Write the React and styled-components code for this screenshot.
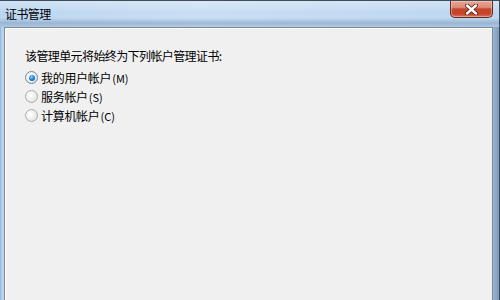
import React from "react";
import styled, { createGlobalStyle } from "styled-components";

const Global = createGlobalStyle`
  html, body { margin: 0; padding: 0; }
  body {
    width: 500px;
    height: 300px;
    overflow: hidden;
    font-family: "Noto Sans CJK SC", "Noto Sans", sans-serif;
  }
`;

const Window = styled.div`
  width: 500px;
  height: 300px;
  display: flex;
  flex-direction: column;
  background: linear-gradient(90deg, #8fb4da 0px, #b9d3ee 2px, #cfe1f4 50%, #a9c8e8 98%, #7e9ab8 100%);
  border-top: 1px solid #3d4a57;
  border-right: 1px solid #3d4a57;
  box-sizing: border-box;
`;

const TitleBar = styled.div`
  height: 26px;
  flex: none;
  display: flex;
  justify-content: space-between;
  align-items: flex-start;
  padding: 0 6px 0 5px;
  background:
    linear-gradient(180deg, rgba(255,255,255,0.3) 0px, rgba(255,255,255,0) 12px, rgba(110,140,175,0) 17px, rgba(110,140,175,0.45) 22px, rgba(110,140,175,0.2) 26px),
    linear-gradient(90deg, #bcd6f0 0%, #c9def3 40%, #c3daf2 70%, #bdd6f0 100%);
`;

const Title = styled.span`
  font-size: 12px;
  line-height: 12px;
  color: #000;
  padding-top: 7px;
  letter-spacing: -0.6px;
`;

const CloseButton = styled.div`
  width: 43px;
  height: 17px;
  box-sizing: border-box;
  display: flex;
  align-items: center;
  justify-content: center;
  border: 1px solid #5e2b22;
  border-top: none;
  border-radius: 0 0 5px 5px;
  background: linear-gradient(180deg, #e9a794 0%, #dc8a73 40%, #c6452c 50%, #c5442c 80%, #d9775b 100%);
  box-shadow: inset 0 0 0 1px rgba(255, 220, 210, 0.45);
`;

const Body = styled.div`
  flex: 1;
  display: flex;
  padding: 0 6px 0 4px;
`;

const Client = styled.div`
  flex: 1;
  background: #f0f0f0;
  border: 1px solid #7d8a97;
  border-bottom: none;
  box-shadow: inset 1px 1px 0 #ffffff;
  padding: 18px 20px 0 20px;
  display: flex;
  flex-direction: column;
`;

const Heading = styled.div`
  font-size: 12px;
  line-height: 19px;
  color: #000;
  letter-spacing: -0.6px;
  margin-bottom: 3px;
`;

const Option = styled.label`
  display: flex;
  align-items: center;
  gap: 3px;
  height: 19px;
  font-size: 12px;
  letter-spacing: -0.3px;
  color: #000;
`;

const Radio = styled.span`
  width: 13px;
  height: 13px;
  box-sizing: border-box;
  border-radius: 50%;
  flex: none;
  display: flex;
  align-items: center;
  justify-content: center;
  border: 1px solid ${(p) => (p.$checked ? "#6e8aa6" : "#a9acaf")};
  background: radial-gradient(circle at 40% 40%, #ffffff 0%, #f0f0f0 45%, #d4d6d8 100%);
  &::after {
    content: "";
    width: 6px;
    height: 6px;
    border-radius: 50%;
    display: ${(p) => (p.$checked ? "block" : "none")};
    background: radial-gradient(circle at 40% 35%, #9ad2ff 0%, #2a84d8 45%, #0d4a92 100%);
  }
`;

const Accel = styled.span`
  font-size: 11px;
  letter-spacing: 0;
  margin-left: 1px;
`;

const options = [
  { label: "我的用户帐户", key: "(M)", checked: true },
  { label: "服务帐户", key: "(S)", checked: false },
  { label: "计算机帐户", key: "(C)", checked: false },
];

export default function App() {
  return (
    <>
      <Global />
      <Window>
        <TitleBar>
          <Title>证书管理</Title>
          <CloseButton>
            <svg width="13" height="11" viewBox="0 0 13 11">
              <path
                d="M2 1.5 L11 9.5 M11 1.5 L2 9.5"
                stroke="#4a1c14"
                strokeWidth="4"
                strokeLinecap="round"
              />
              <path
                d="M2 1.5 L11 9.5 M11 1.5 L2 9.5"
                stroke="#ffffff"
                strokeWidth="2.4"
                strokeLinecap="round"
              />
            </svg>
          </CloseButton>
        </TitleBar>
        <Body>
          <Client>
            <Heading>该管理单元将始终为下列帐户管理证书:</Heading>
            {options.map((o) => (
              <Option key={o.key}>
                <Radio $checked={o.checked} />
                <span>
                  {o.label}
                  <Accel>{o.key}</Accel>
                </span>
              </Option>
            ))}
          </Client>
        </Body>
      </Window>
    </>
  );
}
